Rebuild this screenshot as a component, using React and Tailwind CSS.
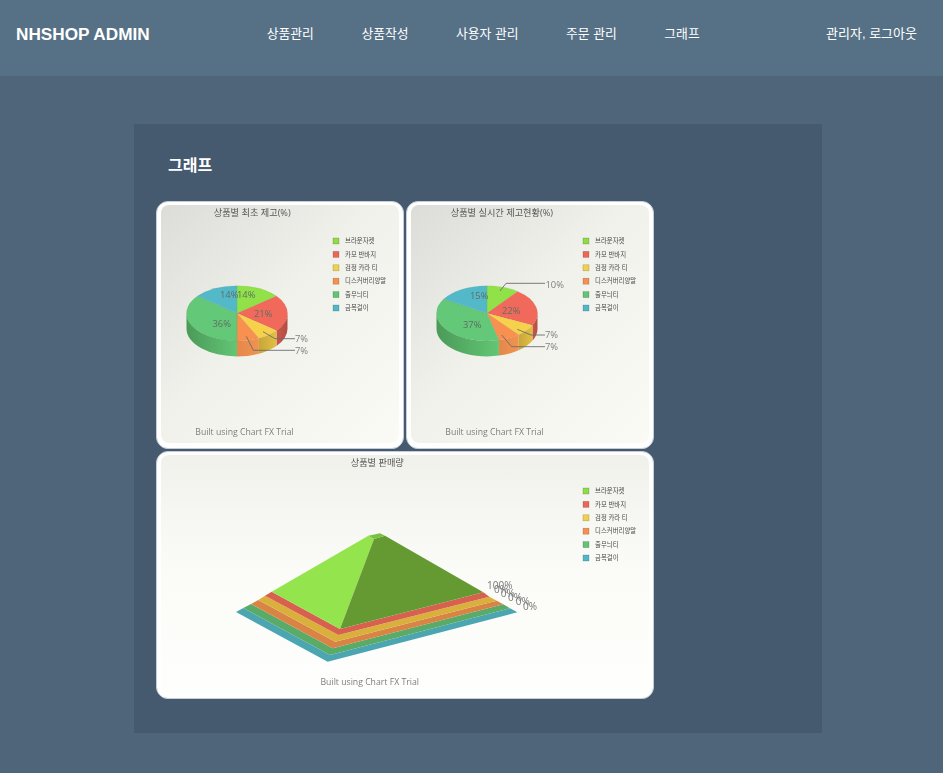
import React from 'react';

const navItems = ['상품관리', '상품작성', '사용자 관리', '주문 관리', '그래프'];
const legendNames = ['브라운자켓', '카모 반바지', '검정 카라 티', '디스커버리양말', '줄무늬티', '금목걸이'];
const legendColors = ['#8fdc45', '#ee6656', '#f4cf48', '#f78f4f', '#60c574', '#50b8c8'];
const chartFont = '"Open Sans", "Noto Sans CJK KR", sans-serif';

const topColors = ['#90e248', '#f1695a', '#f6d24b', '#f8914f', '#63c878', '#53b9c9'];
const wallColors = [
  ['#7cc23f', '#7cc23f'],
  ['#c9584c', '#b54d44'],
  ['#c7a639', '#e2bf45'],
  ['#e4884b', '#f09350'],
  ['#4a9a58', '#63c674'],
  ['#45a0ae', '#45a0ae'],
];

const RX = 50.5;
const RY = 27.6;
const DEPTH = 15.5;

const Legend = ({ x }) => (
  <g>
    {legendNames.map((name, i) => {
      const y = 241 + i * 13.4;
      return (
        <g key={name}>
          <rect x={x} y={y - 3} width="6" height="6" fill={legendColors[i]} stroke="#000" strokeOpacity="0.25" strokeWidth="0.6" />
          <text x={x + 12} y={y + 2.2} fontSize="6.4" fill="#4a4a4a" style={{ fontFamily: chartFont }}>
            {name}
          </text>
        </g>
      );
    })}
  </g>
);

const Pie = ({ id, cx, cy, fractions }) => {
  const point = (f, dy = 0) => {
    const t = f * Math.PI * 2;
    return [cx + RX * Math.sin(t), cy - RY * Math.cos(t) + dy];
  };
  let acc = 0;
  const slices = fractions.map((v, i) => {
    const from = acc;
    acc += v;
    return { from, to: acc, i };
  });

  return (
    <g>
      <defs>
        {wallColors.map((c, i) => (
          <linearGradient key={i} id={`${id}-wall-${i}`} x1="0" y1="0" x2="1" y2="0">
            <stop offset="0" stopColor={c[0]} />
            <stop offset="1" stopColor={c[1]} />
          </linearGradient>
        ))}
      </defs>
      {slices.map(({ from, to, i }) => {
        const a = Math.max(from, 0.25);
        const b = Math.min(to, 0.75);
        if (a >= b) return null;
        const [x1, y1] = point(a);
        const [x2, y2] = point(b);
        const [x3, y3] = point(b, DEPTH);
        const [x4, y4] = point(a, DEPTH);
        return (
          <path
            key={i}
            fill={`url(#${id}-wall-${i})`}
            d={`M${x1} ${y1}A${RX} ${RY} 0 0 1 ${x2} ${y2}L${x3} ${y3}A${RX} ${RY} 0 0 0 ${x4} ${y4}Z`}
          />
        );
      })}
      {slices.map(({ from, to, i }) => {
        const [x1, y1] = point(from);
        const [x2, y2] = point(to);
        const large = to - from > 0.5 ? 1 : 0;
        return (
          <path
            key={i}
            fill={topColors[i]}
            stroke="#000"
            strokeOpacity="0.08"
            strokeWidth="0.5"
            d={`M${cx} ${cy}L${x1} ${y1}A${RX} ${RY} 0 ${large} 1 ${x2} ${y2}Z`}
          />
        );
      })}
    </g>
  );
};

const Labels = ({ items, fill = '#5f6f63', size = 9.4 }) => (
  <g>
    {items.map(([text, x, y], i) => (
      <text key={i} x={x} y={y + 3.3} fontSize={size} fill={fill} style={{ fontFamily: chartFont }}>
        {text}
      </text>
    ))}
  </g>
);

const Leader = ({ points }) => (
  <polyline points={points} fill="none" stroke="#6c6c6c" strokeWidth="0.9" />
);

const ChartTitle = ({ x, y, children }) => (
  <text x={x} y={y + 3} fontSize="9.2" fill="#555" style={{ fontFamily: chartFont }}>
    {children}
  </text>
);

const Trial = ({ x, y }) => (
  <text x={x} y={y + 3} fontSize="8.7" fill="#7d7d7d" style={{ fontFamily: chartFont }}>
    Built using Chart FX Trial
  </text>
);

const Frame = ({ className, gradient, children }) => (
  <div className={`rounded-[12px] border border-[#c5ced7] bg-white pt-[3px] pb-[5px] px-[4px] ${className}`}>
    <div className={`rounded-[8px] overflow-hidden ${gradient}`}>{children}</div>
  </div>
);

const layers = [
  { color: '#4ba6b2', left: [258, 501], bottom: [533, 650], right: [1102, 502] },
  { color: '#5bab68', left: [280, 489], bottom: [540, 630], right: [1080, 490] },
  { color: '#d98345', left: [303, 477], bottom: [548, 610], right: [1060, 478] },
  { color: '#d9b03c', left: [325, 465], bottom: [556, 590], right: [1040, 467] },
  { color: '#d8604f', left: [345, 452], bottom: [565, 570], right: [1018, 455] },
];
const apex = { left: [365, 440], bottom: [570, 552], right: [1000, 442] };

// zoom crop coordinates of the pyramid -> page coordinates
const px = ([x, y]) => `${150 + x / 3},${445 + y / 3}`;

const Pyramid = () => (
  <g>
    {layers.map((l, i) => {
      const next = layers[i + 1] || apex;
      return (
        <polygon
          key={l.color}
          fill={l.color}
          points={[l.left, l.bottom, l.right, next.right, next.bottom, next.left].map(px).join(' ')}
        />
      );
    })}
    <polygon fill="#94e44e" points={[[365, 440], [655, 272], [672, 282], [570, 552]].map(px).join(' ')} />
    <polygon fill="#659a32" points={[[672, 282], [705, 272], [1000, 442], [570, 552]].map(px).join(' ')} />
    <polygon fill="#7cc040" points={[[655, 272], [690, 265], [705, 272], [672, 282]].map(px).join(' ')} />
  </g>
);

export default function App() {
  return (
    <div className="min-h-[773px] bg-[#4f6579] font-['Liberation_Sans','Noto_Sans_CJK_KR',sans-serif] text-white">
      <header className="flex h-[76px] items-center bg-[#567186] pb-2 pl-4 pr-[26px]">
        <div className="pt-[2px] text-[17.2px] font-bold">NHSHOP ADMIN</div>
        <nav className="ml-[117px] flex gap-[47.6px] text-[12.8px]">
          {navItems.map((item) => (
            <a key={item} href="#">
              {item}
            </a>
          ))}
        </nav>
        <div className="ml-auto text-[13px]">관리자, 로그아웃</div>
      </header>

      <main className="ml-[134px] mt-12 h-[609px] w-[688px] bg-[#455a6f] px-[22px] pt-[31px]">
        <h2 className="pl-3 text-[16px] font-bold leading-[22px]">그래프</h2>
        <div className="mt-[24px] flex w-[498px] flex-wrap gap-[2px]">
          <Frame className="w-[248px]" gradient="bg-gradient-to-br from-[#dcdcd8] via-[#f1f1ec] via-45% to-[#fbfbf6]">
            <svg viewBox="161 205 238 238" width="238" height="238" className="block blur-[0.4px]">
              <ChartTitle x={213.7} y={212.5}>상품별 최초 제고(%)</ChartTitle>
              <Legend x={333} />
              <Pie id="first" cx={237} cy={313.3} fractions={[1 / 7, 3 / 14, 1 / 14, 1 / 14, 5 / 14, 1 / 7]} />
              <Leader points="263,331.7 275,338.7 295,338.7" />
              <Leader points="246.3,336.3 253.3,350.3 295,350.3" />
              <Labels
                items={[
                  ['14%', 220, 295],
                  ['14%', 237, 295],
                  ['21%', 254, 314],
                  ['36%', 212.5, 323.7],
                ]}
              />
              <Labels
                fill="#808080"
                items={[
                  ['7%', 295, 339],
                  ['7%', 295, 350.5],
                ]}
              />
              <Trial x={195.3} y={432} />
            </svg>
          </Frame>

          <Frame className="w-[248px]" gradient="bg-gradient-to-br from-[#dcdcd8] via-[#f1f1ec] via-45% to-[#fbfbf6]">
            <svg viewBox="411 205 238 238" width="238" height="238" className="block blur-[0.4px]">
              <ChartTitle x={450.7} y={212.5}>상품별 실시간 제고현황(%)</ChartTitle>
              <Legend x={583} />
              <Pie id="live" cx={487} cy={313.3} fractions={[0.104, 0.218, 0.07, 0.07, 0.374, 0.164]} />
              <Leader points="500,291 506,283.3 545,283.3" />
              <Leader points="517.3,329.3 531,335 545,335" />
              <Leader points="501.7,335 511.7,346.7 545,346.7" />
              <Labels
                items={[
                  ['15%', 470, 295.7],
                  ['22%', 502, 310.7],
                  ['37%', 463, 324.3],
                ]}
              />
              <Labels
                fill="#808080"
                items={[
                  ['10%', 545.5, 284.3],
                  ['7%', 545, 335],
                  ['7%', 545, 346.7],
                ]}
              />
              <Trial x={445.3} y={432} />
            </svg>
          </Frame>

          <Frame className="w-[498px]" gradient="bg-gradient-to-b from-[#f1f1ec] via-[#fbfbf8] to-[#fefefc]">
            <svg viewBox="161 455 488 238" width="488" height="238" className="block blur-[0.4px]">
              <ChartTitle x={350.7} y={462.5}>상품별 판매량</ChartTitle>
              <g transform="translate(0 250)">
                <Legend x={583} />
              </g>
              <Pyramid />
              <Labels
                fill="#777"
                size={10}
                items={[
                  ['100%', 487, 586],
                  ['0%', 494, 590],
                  ['0%', 500.7, 594],
                  ['0%', 508, 598],
                  ['0%', 515.7, 602],
                  ['0%', 523, 606.7],
                ]}
              />
              <Trial x={320.5} y={682} />
            </svg>
          </Frame>
        </div>
      </main>
    </div>
  );
}
